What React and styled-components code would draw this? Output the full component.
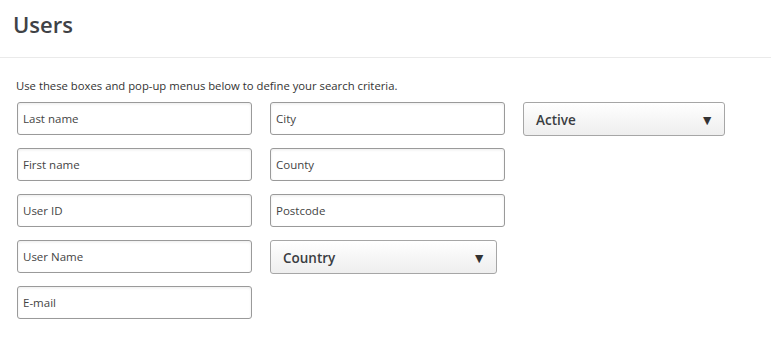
import styled, { createGlobalStyle } from "styled-components";

const GlobalStyle = createGlobalStyle`
  body {
    margin: 0;
    background: #ffffff;
    font-family: "Open Sans", "Liberation Sans", sans-serif;
    color: #333333;
  }
`;

const Header = styled.div`
  height: 58px;
  border-bottom: 1px solid #eaeaea;
  box-sizing: border-box;
  padding: 8px 13px 0;

  > h1 {
    margin: 0;
    font-size: 22px;
    line-height: 32px;
    font-weight: 600;
    color: #3f4246;
  }
`;

const Body = styled.div`
  padding: 19px 16px 0;

  > p {
    margin: 0 0 7px;
    font-size: 11.3px;
    line-height: 18px;
    color: #333333;
  }
`;

const Columns = styled.div`
  display: flex;
  gap: 18px;
  padding-left: 1px;
`;

const Column = styled.div`
  display: flex;
  flex-direction: column;
  gap: 13px;
  width: ${(p) => p.width}px;
`;

const Field = styled.input`
  box-sizing: border-box;
  width: 235px;
  height: 33px;
  padding: 0 5px;
  border: 1px solid #9a9a9a;
  border-radius: 3px;
  box-shadow: inset 0 1px 3px rgba(0, 0, 0, 0.08);
  font-family: inherit;
  font-size: 11.5px;
  color: #333;
  outline: none;

  &::placeholder {
    color: #444;
    opacity: 1;
  }
`;

const Select = styled.div`
  box-sizing: border-box;
  width: ${(p) => p.width}px;
  height: 34px;
  display: flex;
  align-items: center;
  justify-content: space-between;
  padding: 1px 10px 0 12px;
  border: 1px solid #a6a6a6;
  border-radius: 3px;
  background: linear-gradient(#ffffff, #eeeeee);
  font-size: 13.5px;
  font-weight: 600;
  color: #3a3d42;

  > span:last-child {
    font-size: 14px;
    color: #333;
  }
`;

export default function App() {
  return (
    <>
      <GlobalStyle />
      <Header>
        <h1>Users</h1>
      </Header>
      <Body>
        <p>Use these boxes and pop-up menus below to define your search criteria.</p>
        <Columns>
          <Column width={235}>
            <Field placeholder="Last name" />
            <Field placeholder="First name" />
            <Field placeholder="User ID" />
            <Field placeholder="User Name" />
            <Field placeholder="E-mail" />
          </Column>
          <Column width={235}>
            <Field placeholder="City" />
            <Field placeholder="County" />
            <Field placeholder="Postcode" />
            <Select width={227}>
              <span>Country</span>
              <span>▼</span>
            </Select>
          </Column>
          <Column width={201}>
            <Select width={202}>
              <span>Active</span>
              <span>▼</span>
            </Select>
          </Column>
        </Columns>
      </Body>
    </>
  );
}
